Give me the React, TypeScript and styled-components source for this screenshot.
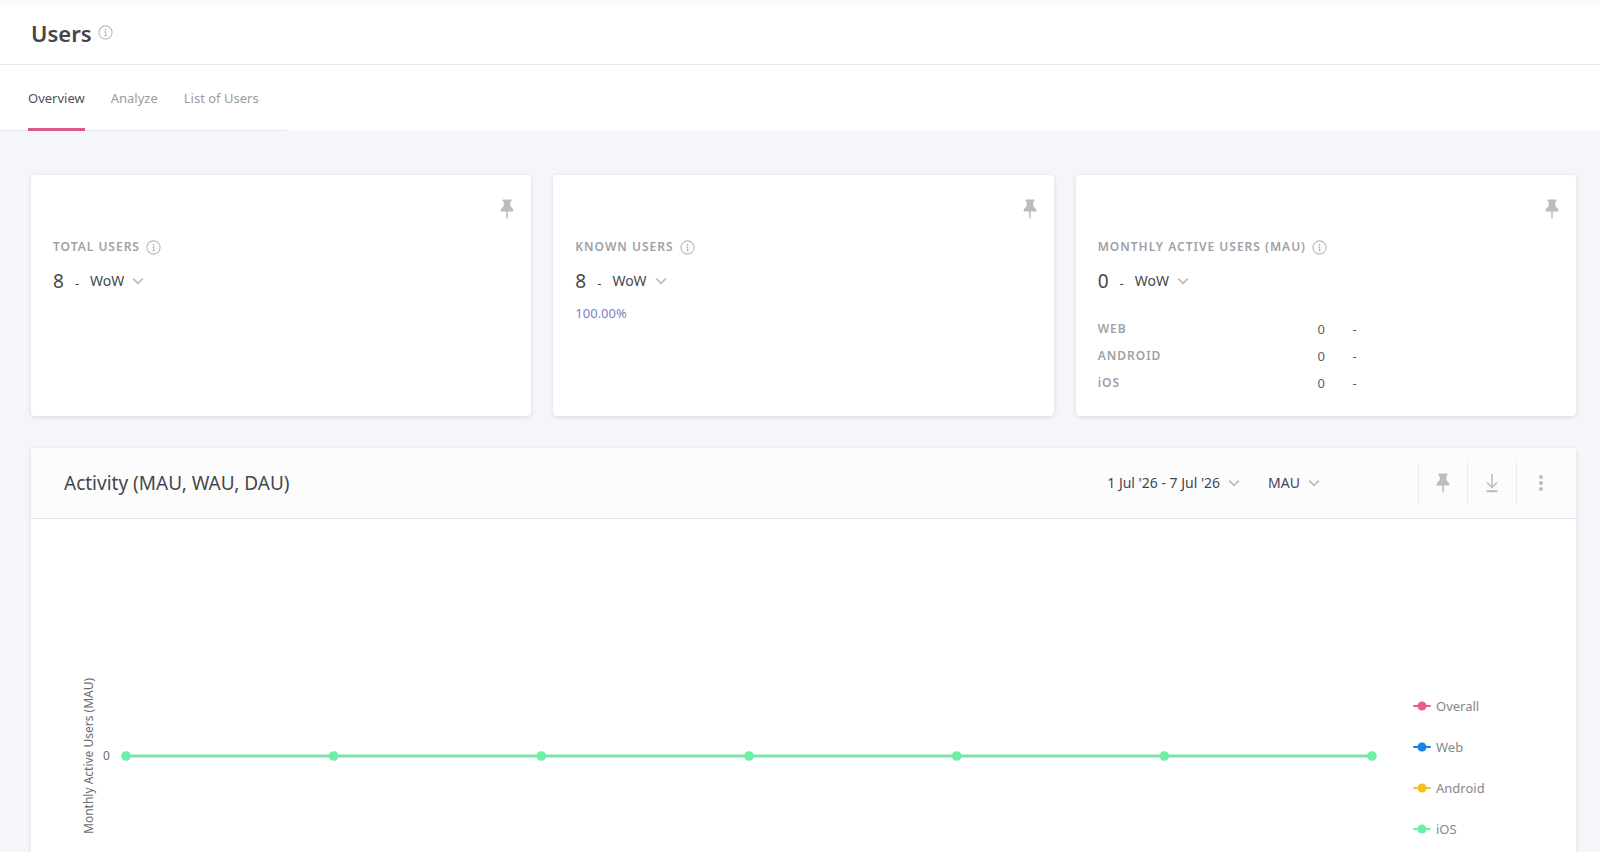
import React from "react";
import styled, { createGlobalStyle } from "styled-components";

const GlobalStyle = createGlobalStyle`
  *, *::before, *::after { box-sizing: border-box; }
  body {
    margin: 0;
    background: #f5f6fa;
    color: #46474d;
    font-family: "Noto Sans", "Open Sans", sans-serif;
    font-size: 13px;
    line-height: 20px;
  }
  button, select { font: inherit; color: inherit; background: none; border: 0; padding: 0; margin: 0; cursor: pointer; }
  h1, h2, h3, p, dl, dd { margin: 0; font-weight: 400; }
`;

const Page = styled.div`
  display: flex;
  flex-direction: column;
  min-height: 100vh;
`;

const TopBar = styled.header`
  display: flex;
  align-items: center;
  gap: 6px;
  height: 65px;
  padding: 0 31px 2px;
  background: #fff;
  border-top: 4px solid #fafafb;
  border-bottom: 1px solid #e9eaec;
`;

const PageTitle = styled.h1`
  font-size: 22px;
  line-height: 30px;
  font-weight: 600;
  color: #44454c;
`;

const TitleInfo = styled.span`
  display: flex;
  padding-bottom: 2px;
`;

const TabBar = styled.nav`
  display: flex;
  height: 66px;
  background: #fff;
`;

const TabList = styled.div`
  display: flex;
  gap: 26px;
  padding: 0 28px;
  border-bottom: 1px solid #e6e7ec;
`;

const Tab = styled.a<{ $active?: boolean }>`
  display: flex;
  align-items: center;
  margin-bottom: -1px;
  padding-top: 3px;
  border-bottom: 3px solid ${(p) => (p.$active ? "#d9578c" : "transparent")};
  color: ${(p) => (p.$active ? "#505157" : "#9b9ca1")};
  text-decoration: none;
`;

const Content = styled.main`
  display: flex;
  flex: 1;
  flex-direction: column;
  gap: 32px;
  padding: 44px 24px 0 31px;
`;

const CardRow = styled.section`
  display: grid;
  grid-template-columns: repeat(3, 1fr);
  gap: 22px;
`;

const Card = styled.article`
  display: flex;
  flex-direction: column;
  min-height: 241px;
  padding: 24px 17px 16px 22px;
  background: #fff;
  border-radius: 4px;
  box-shadow: 0 1px 4px rgba(60, 64, 90, 0.16);
`;

const IconButton = styled.button`
  display: flex;
  align-items: center;
  justify-content: center;
  color: #bcbcbe;
`;

const CardActions = styled.div`
  display: flex;
  justify-content: flex-end;
  height: 38px;
  align-items: flex-start;
`;

const CardLabel = styled.h2`
  display: flex;
  align-items: center;
  gap: 6px;
  font-size: 12px;
  line-height: 20px;
  font-weight: 600;
  letter-spacing: 1px;
  color: #a0a1a5;
`;

const ValueRow = styled.div`
  display: flex;
  align-items: center;
  margin-top: 8px;
  line-height: 28px;
`;

const Value = styled.span`
  font-size: 19px;
`;

const Change = styled.span`
  padding: 4px 11px 0;
`;

const SelectBox = styled.span`
  position: relative;
  display: inline-flex;
  align-items: center;
  font-size: 14px;
`;

const Select = styled.select`
  appearance: none;
  field-sizing: content;
  padding-right: 20px;
  line-height: 20px;
  outline-offset: 2px;
`;

const SelectArrow = styled.span`
  position: absolute;
  right: 0;
  display: flex;
  pointer-events: none;
`;

const Percent = styled.p`
  margin-top: 6px;
  color: #7c7fc4;
`;

const Breakdown = styled.table`
  width: 100%;
  margin-top: 18px;
  border-collapse: collapse;
  table-layout: fixed;
`;

const PlatformName = styled.th`
  width: 47%;
  padding: 0;
  height: 27px;
  font-size: 12px;
  font-weight: 600;
  letter-spacing: 1px;
  text-align: left;
  color: #a0a1a5;
`;

const PlatformCell = styled.td<{ $wide?: boolean }>`
  width: ${(p) => (p.$wide ? "auto" : "35px")};
  padding: 0 0 0 3px;
  color: #5c5d62;
`;

const Panel = styled.section`
  display: flex;
  flex: 1;
  flex-direction: column;
  background: #fff;
  border-radius: 4px 4px 0 0;
  box-shadow: 0 1px 4px rgba(60, 64, 90, 0.16);
`;

const PanelHeader = styled.header`
  display: flex;
  align-items: center;
  height: 71px;
  padding: 0 11px 0 33px;
  background: #fcfcfd;
  border-bottom: 1px solid #e4e5e8;
  border-radius: 4px 4px 0 0;
`;

const PanelTitle = styled.h2`
  flex: 1;
  font-size: 19px;
  line-height: 28px;
`;

const Filters = styled.div`
  display: flex;
  gap: 28px;
  margin-right: 98px;
  font-size: 14px;
`;

const DateButton = styled.button`
  display: flex;
  align-items: center;
  gap: 8px;
`;

const Tools = styled.div`
  display: flex;
`;

const ToolCell = styled.div`
  display: flex;
  align-items: center;
  justify-content: center;
  width: 49px;
  height: 42px;
  border-left: 1px solid #ebebed;
`;

const ChartBody = styled.div`
  display: flex;
  align-items: flex-start;
  padding: 153px 30px 0 48px;
`;

const AxisTitle = styled.span`
  width: 20px;
  height: 168px;
  writing-mode: vertical-rl;
  transform: rotate(180deg);
  text-align: center;
  font-size: 12px;
  line-height: 20px;
  color: #6c6d72;
`;

const AxisTick = styled.span`
  width: 27px;
  padding-left: 4px;
  font-size: 12px;
  line-height: 168px;
  color: #6c6d72;
`;

const Plot = styled.svg`
  display: block;
  flex: 1;
  min-width: 0;
  height: 168px;
  overflow: visible;
`;

const Legend = styled.ul`
  width: 133px;
  margin: 0 0 0 41px;
  padding: 13px 0 0;
  list-style: none;
`;

const LegendItem = styled.li`
  display: flex;
  align-items: center;
  gap: 5px;
  height: 41px;
  color: #86878c;
`;

const InfoIcon = () => (
  <svg width="15" height="15" viewBox="0 0 15 15" fill="none" stroke="#b9babd" aria-hidden="true">
    <circle cx="7.5" cy="7.5" r="6.6" strokeWidth="1.1" />
    <circle cx="7.5" cy="4.6" r="0.9" fill="#b0b1b4" stroke="none" />
    <path d="M6.4 6.9H7.7V10.6M6.2 10.7H8.9" strokeWidth="1.1" />
  </svg>
);

const PinIcon = () => (
  <svg width="14" height="21" viewBox="0 0 14 21" fill="currentColor" aria-hidden="true">
    <path d="M2.6 0.5H11.4V2.4L10.3 3.2V7.2C12 8.4 13.4 10 13.6 12.5H7.8V18L7 20.5L6.2 18V12.5H0.4C0.6 10 2 8.4 3.7 7.2V3.2L2.6 2.4Z" />
  </svg>
);

const ChevronIcon = () => (
  <svg width="12" height="12" viewBox="0 0 12 12" fill="none" stroke="#b9babd" strokeWidth="1.6" aria-hidden="true">
    <path d="M1.2 3.6L6 8.4L10.8 3.6" />
  </svg>
);

const DownloadIcon = () => (
  <svg width="14" height="20" viewBox="0 0 14 20" fill="none" stroke="currentColor" strokeWidth="1.5" aria-hidden="true">
    <path d="M7 1V14.4M2.2 9.8L7 14.6L11.8 9.8" />
    <path d="M1.5 18.2H12.5" strokeWidth="2" />
  </svg>
);

const MoreIcon = () => (
  <svg width="6" height="18" viewBox="0 0 6 18" fill="currentColor" aria-hidden="true">
    <circle cx="3" cy="3" r="2" />
    <circle cx="3" cy="9" r="2" />
    <circle cx="3" cy="15" r="2" />
  </svg>
);

const LegendMark = ({ color }: { color: string }) => (
  <svg width="18" height="10" viewBox="0 0 18 10" aria-hidden="true">
    <path d="M1 5H17" stroke={color} strokeWidth="2" strokeLinecap="round" />
    <circle cx="9" cy="5" r="4.5" fill={color} />
  </svg>
);

function Dropdown({ label, options }: { label: string; options: string[] }) {
  return (
    <SelectBox>
      <Select aria-label={label}>
        {options.map((o) => (
          <option key={o}>{o}</option>
        ))}
      </Select>
      <SelectArrow>
        <ChevronIcon />
      </SelectArrow>
    </SelectBox>
  );
}

function StatCard({ label, value, children }: { label: string; value: number; children?: React.ReactNode }) {
  return (
    <Card>
      <CardActions>
        <IconButton aria-label={`Pin ${label}`}>
          <PinIcon />
        </IconButton>
      </CardActions>
      <CardLabel>
        {label}
        <InfoIcon />
      </CardLabel>
      <ValueRow>
        <Value>{value}</Value>
        <Change>-</Change>
        <Dropdown label={`${label} comparison`} options={["WoW", "MoM"]} />
      </ValueRow>
      {children}
    </Card>
  );
}

const tabs = ["Overview", "Analyze", "List of Users"];
const platforms = ["WEB", "ANDROID", "iOS"];
const days = [0, 1, 2, 3, 4, 5, 6];
const series = [
  { name: "Overall", color: "#ee5a8f" },
  { name: "Web", color: "#1686e6" },
  { name: "Android", color: "#f5bf1e" },
  { name: "iOS", color: "#6bf0a5" },
];

export default function App() {
  return (
    <Page>
      <GlobalStyle />
      <TopBar>
        <PageTitle>Users</PageTitle>
        <TitleInfo>
          <InfoIcon />
        </TitleInfo>
      </TopBar>
      <TabBar>
        <TabList>
          {tabs.map((t, i) => (
            <Tab key={t} href="#" $active={i === 0}>
              {t}
            </Tab>
          ))}
        </TabList>
      </TabBar>
      <Content>
        <CardRow>
          <StatCard label="TOTAL USERS" value={8} />
          <StatCard label="KNOWN USERS" value={8}>
            <Percent>100.00%</Percent>
          </StatCard>
          <StatCard label="MONTHLY ACTIVE USERS (MAU)" value={0}>
            <Breakdown>
              <tbody>
                {platforms.map((p) => (
                  <tr key={p}>
                    <PlatformName scope="row">{p}</PlatformName>
                    <PlatformCell>0</PlatformCell>
                    <PlatformCell $wide>-</PlatformCell>
                  </tr>
                ))}
              </tbody>
            </Breakdown>
          </StatCard>
        </CardRow>
        <Panel>
          <PanelHeader>
            <PanelTitle>Activity (MAU, WAU, DAU)</PanelTitle>
            <Filters>
              <DateButton>
                1 Jul '26 - 7 Jul '26
                <ChevronIcon />
              </DateButton>
              <Dropdown label="Activity metric" options={["MAU", "WAU", "DAU"]} />
            </Filters>
            <Tools>
              <ToolCell>
                <IconButton aria-label="Pin activity">
                  <PinIcon />
                </IconButton>
              </ToolCell>
              <ToolCell>
                <IconButton aria-label="Download">
                  <DownloadIcon />
                </IconButton>
              </ToolCell>
              <ToolCell>
                <IconButton aria-label="More options">
                  <MoreIcon />
                </IconButton>
              </ToolCell>
            </Tools>
          </PanelHeader>
          <ChartBody>
            <AxisTitle>Monthly Active Users (MAU)</AxisTitle>
            <AxisTick>0</AxisTick>
            <Plot role="img" aria-label="Monthly active users per day">
              <line x1="0" y1="84" x2="100%" y2="84" stroke="#7de3a8" strokeWidth="3" />
              {days.map((d) => (
                <circle key={d} cx={`${(d / 6) * 100}%`} cy="84" r="4.8" fill="#6bf0a5" />
              ))}
            </Plot>
            <Legend>
              {series.map((s) => (
                <LegendItem key={s.name}>
                  <LegendMark color={s.color} />
                  {s.name}
                </LegendItem>
              ))}
            </Legend>
          </ChartBody>
        </Panel>
      </Content>
    </Page>
  );
}
